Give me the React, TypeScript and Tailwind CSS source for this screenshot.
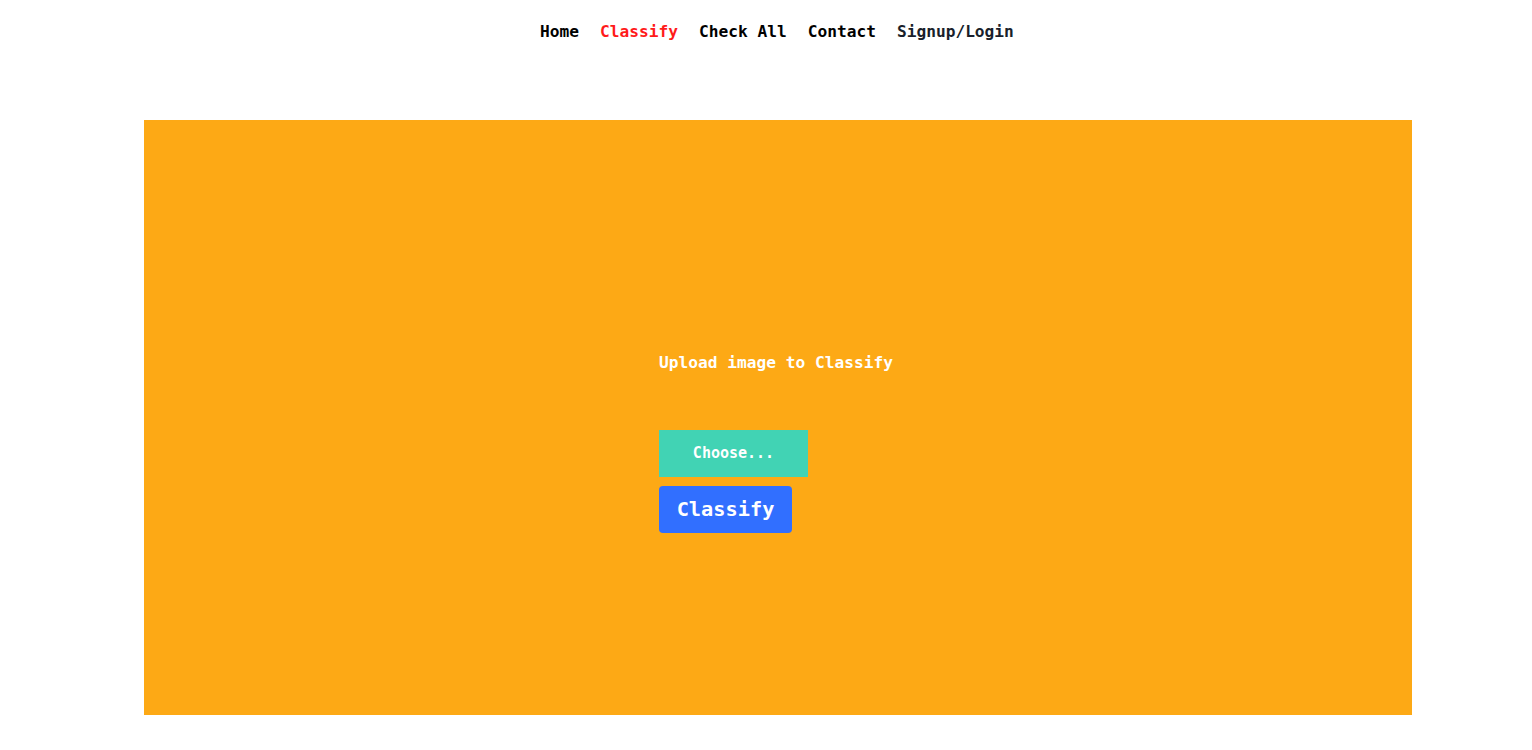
export default function App() {
  const links = ["Home", "Classify", "Check All", "Contact", "Signup/Login"]
  return (
    <div className="min-h-[750px] bg-white font-['DejaVu_Sans_Mono',monospace] font-bold">
      <nav className="flex h-[64px] items-center pt-[1px] pl-[540px] gap-[21px] text-[16.2px]">
        {links.map((l) => (
          <a
            key={l}
            className={l === "Classify" ? "text-[#ff1a1a]" : l === "Signup/Login" ? "text-[#1a1f2b]" : "text-black"}
          >
            {l}
          </a>
        ))}
      </nav>
      <main className="ml-[144px] w-[1268px] mt-[56px] h-[595px] bg-[#fda915] pl-[515px] pt-[232px]">
        <p className="text-[16.2px] leading-[22px] text-white">Upload image to Classify</p>
        <div className="mt-[56px] flex flex-col items-start gap-[9px]">
          <label className="flex h-[47px] w-[149px] items-center justify-center bg-[#41d3b4] text-[15px] text-white">
            Choose...
          </label>
          <button className="h-[47px] w-[133px] rounded-[4px] bg-[#316fff] text-[20.3px] text-white">
            Classify
          </button>
        </div>
      </main>
    </div>
  )
}
